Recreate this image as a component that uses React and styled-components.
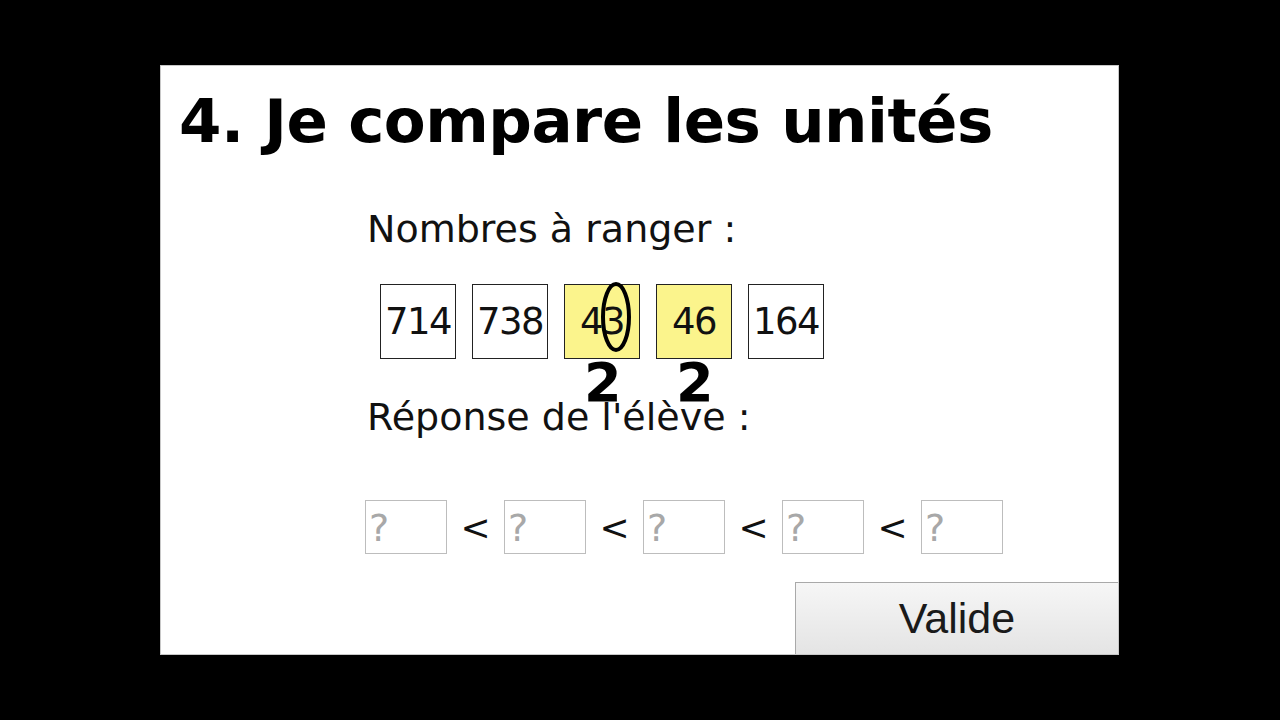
import React from "react";
import styled, { createGlobalStyle } from "styled-components";

const GlobalStyle = createGlobalStyle`
  html, body {
    margin: 0;
    padding: 0;
    background: #000;
  }
  body {
    width: 1280px;
    height: 720px;
    overflow: hidden;
    font-family: "DejaVu Sans", Verdana, sans-serif;
  }
`;

const Stage = styled.div`
  width: 1280px;
  height: 720px;
  padding: 65px 0 0 160px;
  box-sizing: border-box;
  background: #000;
`;

const Panel = styled.div`
  position: relative;
  width: 959px;
  height: 590px;
  box-sizing: border-box;
  background: #fff;
  border: 1px solid #c8c8c8;
  display: flex;
  flex-direction: column;
`;

const Title = styled.h1`
  margin: 0;
  padding: 19px 0 0 18px;
  font-family: "DejaVu Sans", Verdana, sans-serif;
  font-weight: bold;
  font-size: 61px;
  line-height: 72px;
  color: #000;
  letter-spacing: -0.5px;
`;

const Content = styled.div`
  padding-left: 206px;
  display: flex;
  flex-direction: column;
`;

const Label = styled.div`
  font-size: 38px;
  line-height: 44px;
  color: #111;
  margin-top: ${(p) => p.$top}px;
`;

const NumberRow = styled.div`
  display: flex;
  gap: 16px;
  margin: 33px 0 0 13px;
`;

const NumberBox = styled.div`
  width: 76px;
  height: 75px;
  box-sizing: border-box;
  border: 1px solid #222;
  background: ${(p) => (p.$hl ? "#fbf48c" : "#fff")};
  display: flex;
  align-items: center;
  justify-content: center;
  font-size: 37px;
  color: #111;
  letter-spacing: -1.5px;
`;

const AnswerRow = styled.div`
  display: flex;
  align-items: center;
  margin: 61px 0 0 -2px;
`;

const AnswerBox = styled.div`
  width: 82px;
  height: 54px;
  box-sizing: border-box;
  border: 1px solid #bdbdbd;
  color: #a8a8a8;
  font-size: 38px;
  line-height: 54px;
  padding-left: 3px;
`;

const Less = styled.span`
  width: 57px;
  text-align: center;
  font-size: 36px;
  color: #111;
`;

const ValidButton = styled.button`
  margin-top: auto;
  align-self: flex-end;
  width: 323px;
  height: 72px;
  border: 1px solid #a9a9a9;
  border-right: none;
  border-bottom: none;
  background: linear-gradient(#f6f6f6, #e4e4e4);
  font-family: "Liberation Sans", Arial, sans-serif;
  font-size: 43px;
  color: #1a1a1a;
  padding: 0;
`;

const Digit = styled.span`
  position: absolute;
  top: 287px;
  left: ${(p) => p.$x}px;
  font-family: "DejaVu Sans", Verdana, sans-serif;
  font-weight: bold;
  font-size: 54px;
  line-height: 60px;
  color: #000;
`;

const Ring = styled.svg`
  position: absolute;
  left: 438px;
  top: 214px;
`;

const numbers = [
  { v: "714" },
  { v: "738" },
  { v: "43", hl: true },
  { v: "46", hl: true },
  { v: "164" },
];

export default function App() {
  return (
    <>
      <GlobalStyle />
      <Stage>
        <Panel>
          <Title>4. Je compare les unités</Title>
          <Content>
            <Label $top={50}>Nombres à ranger :</Label>
            <NumberRow>
              {numbers.map((n) => (
                <NumberBox key={n.v} $hl={n.hl}>
                  {n.v}
                </NumberBox>
              ))}
            </NumberRow>
            <Label $top={36}>Réponse de l'élève :</Label>
            <AnswerRow>
              {[0, 1, 2, 3, 4].map((i) => (
                <React.Fragment key={i}>
                  {i > 0 && <Less>&lt;</Less>}
                  <AnswerBox>?</AnswerBox>
                </React.Fragment>
              ))}
            </AnswerRow>
          </Content>
          <ValidButton>Valide</ValidButton>

          <Ring width="34" height="74" viewBox="0 0 34 74">
            <ellipse cx="17" cy="37" rx="13" ry="33" fill="none" stroke="#000" strokeWidth="4" />
          </Ring>
          <Digit $x={423}>2</Digit>
          <Digit $x={515}>2</Digit>
        </Panel>
      </Stage>
    </>
  );
}
